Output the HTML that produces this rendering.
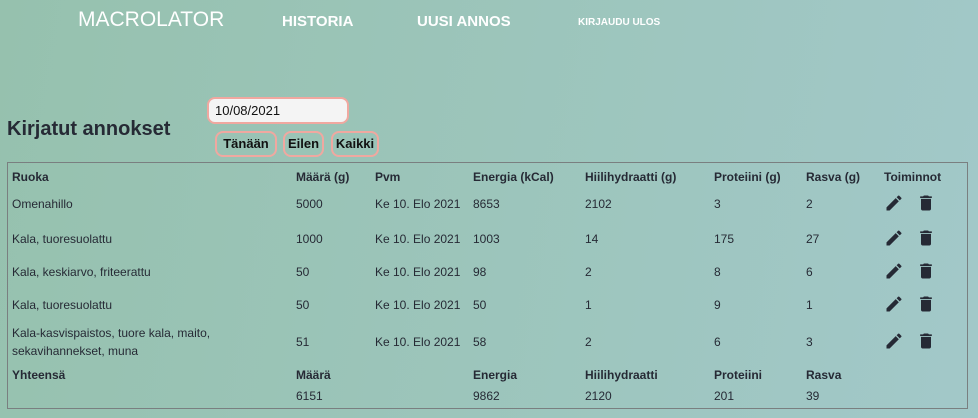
<!DOCTYPE html>
<html><head><meta charset="utf-8"><style>
*{margin:0;padding:0;box-sizing:border-box}
body{width:978px;height:418px;overflow:hidden;background:linear-gradient(100deg,#96c1ae 0%,#9cc5bb 50%,#a2c8c9 100%);font-family:"Liberation Sans",sans-serif;color:#262a35;position:relative}
.a{position:absolute;white-space:nowrap}
.nav{color:#fff;font-weight:bold}
.btn{position:absolute;border:2px solid #f0a8a0;border-radius:8px;font-weight:bold;font-size:13px;color:#111;height:26px;top:131px;line-height:22px;text-align:center}
.t{position:absolute;left:7px;top:162px;width:961px;height:247px;border:1px solid #7a7f80}
.h{font-weight:bold;font-size:12px}
.c{font-size:12px;line-height:18px}
</style></head><body>
<div class="a" style="left:78px;top:8px;font-size:21px;color:#fff">MACROLATOR</div>
<div class="a nav" style="left:282px;top:13px;font-size:15px">HISTORIA</div>
<div class="a nav" style="left:417px;top:13px;font-size:15px">UUSI ANNOS</div>
<div class="a nav" style="left:578px;top:17px;font-size:10px">KIRJAUDU ULOS</div>
<div class="a" style="left:7px;top:118px;font-size:20px;font-weight:bold">Kirjatut annokset</div>
<div class="a" style="left:207px;top:97px;width:142px;height:27px;background:#f4f4f4;border:2px solid #f0a8a0;border-radius:8px;font-size:13px;padding:4px 6px;color:#111">10/08/2021</div>
<div class="btn" style="left:215px;width:62px">Tänään</div>
<div class="btn" style="left:283px;width:41px">Eilen</div>
<div class="btn" style="left:331px;width:48px">Kaikki</div>
<div class="t"></div>
<script>
var cols=[12,296,375,473,585,714,806,884];
function row(y,v,cls){v.forEach(function(s,i){if(s===null)return;var d=document.createElement('div');d.className='a '+cls;d.style.left=cols[i]+'px';d.style.top=y+'px';d.innerHTML=s;document.body.appendChild(d);});}
row(170,['Ruoka','Määrä (g)','Pvm','Energia (kCal)','Hiilihydraatti (g)','Proteiini (g)','Rasva (g)','Toiminnot'],'h');
var data=[[195,'Omenahillo','5000','8653','2102','3','2'],[230,'Kala, tuoresuolattu','1000','1003','14','175','27'],[263,'Kala, keskiarvo, friteerattu','50','98','2','8','6'],[296,'Kala, tuoresuolattu','50','50','1','9','1'],[333,'Kala-kasvispaistos, tuore kala, maito,<br>sekavihannekset, muna','51','58','2','6','3']];
var pen='<svg width="20" height="20" viewBox="0 0 24 24"><path fill="#262a35" d="M3 17.25V21h3.75L17.81 9.94l-3.75-3.75L3 17.25zM20.71 7.04a1 1 0 000-1.41l-2.34-2.34a1 1 0 00-1.41 0l-1.83 1.83 3.75 3.75 1.83-1.83z"/></svg>';
var bin='<svg width="20" height="20" viewBox="0 0 24 24"><path fill="#262a35" d="M6 19c0 1.1.9 2 2 2h8c1.1 0 2-.9 2-2V7H6v12zM19 4h-3.5l-1-1h-5l-1 1H5v2h14V4z"/></svg>';
data.forEach(function(d){var y=d[0];var multi=d[1].indexOf('<br>')>0;
row(multi?y-9:y,[d[1],null,null,null,null,null,null,null],'c');
row(y,[null,d[2],'Ke 10. Elo 2021',d[3],d[4],d[5],d[6],null],'c');
var p=document.createElement('div');p.className='a';p.style.left='884px';p.style.top=(y-2)+'px';p.innerHTML=pen+'<span style="display:inline-block;width:12px"></span>'+bin;document.body.appendChild(p);});
row(368,['Yhteensä','Määrä',null,'Energia','Hiilihydraatti','Proteiini','Rasva',null],'h');
row(387,[null,'6151',null,'9862','2120','201','39',null],'c');
</script>
</body></html>
